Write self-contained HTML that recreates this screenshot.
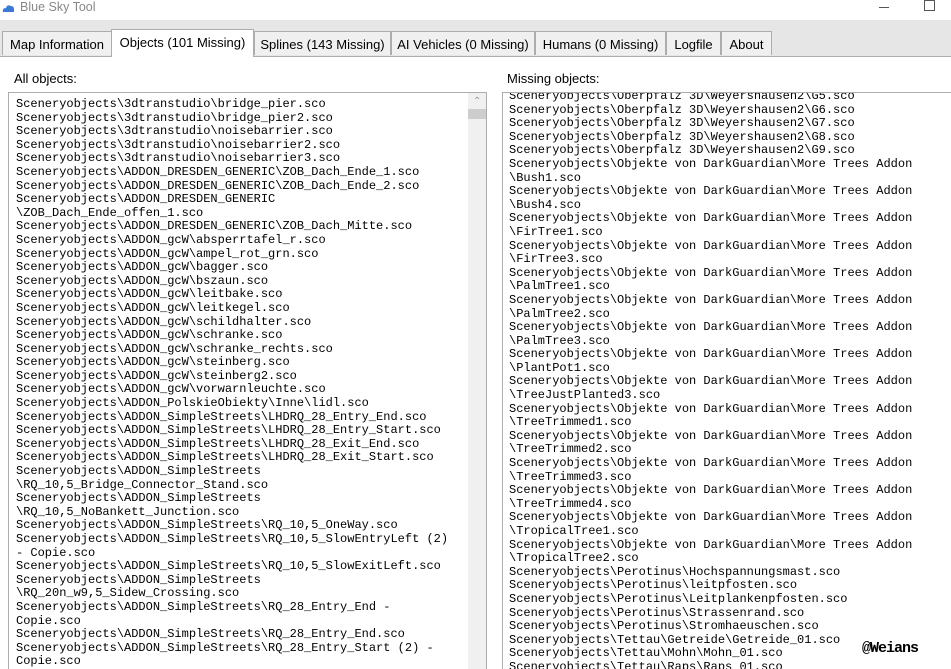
<!DOCTYPE html>
<html><head><meta charset="utf-8"><style>
html,body{margin:0;width:951px;height:669px;overflow:hidden}
body{background:#fff;font-family:"Liberation Sans",sans-serif;position:relative}
.title{position:absolute;left:20px;top:0px;font-size:12.5px;color:#888;}
.bar{position:absolute;left:0;top:20px;width:951px;height:36px;background:#e6e6e6;border-bottom:1px solid #adadad}
.tab{position:absolute;top:31px;height:24px;background:#f0f0f0;border:1px solid #adadad;border-bottom:none;font-size:13px;line-height:25px;text-align:center;color:#000;box-sizing:border-box}
.tab.sel{top:29px;height:28px;background:#fff;line-height:26px;border-bottom:none;z-index:2}
.lbl{position:absolute;font-size:13px;color:#000}
.box{position:absolute;border:1px solid #adadad;background:#fff;overflow:hidden}
.txt{position:absolute;font-family:"Liberation Mono",monospace;font-size:12px;line-height:13.6px;white-space:pre;color:#000}
</style></head><body>
<svg style="position:absolute;left:2px;top:3px" width="13" height="10"><path d="M1 9 Q0 5 4 5 Q5 1 9 3 Q12 3 12 6 L12 9 Z" fill="#3a7ad6"/></svg>
<div class="title">Blue Sky Tool</div>
<div style="position:absolute;left:879px;top:7px;width:10px;height:1px;background:#555"></div>
<div style="position:absolute;left:924px;top:0px;width:9px;height:9px;border:1px solid #555"></div>
<div class="bar"></div>
<div class="tab" style="left:2px;width:110px">Map Information</div>
<div class="tab sel" style="left:111px;width:143px">Objects (101 Missing)</div>
<div class="tab" style="left:254px;width:137px">Splines (143 Missing)</div>
<div class="tab" style="left:391px;width:144px">AI Vehicles (0 Missing)</div>
<div class="tab" style="left:535px;width:131px">Humans (0 Missing)</div>
<div class="tab" style="left:666px;width:55px">Logfile</div>
<div class="tab" style="left:721px;width:51px">About</div>
<div class="lbl" style="left:14px;top:71px">All objects:</div>
<div class="lbl" style="left:507px;top:71px">Missing objects:</div>
<div class="box" style="left:8px;top:92px;width:477px;height:590px">
<div class="txt" style="left:7px;top:5px">Sceneryobjects\3dtranstudio\bridge_pier.sco
Sceneryobjects\3dtranstudio\bridge_pier2.sco
Sceneryobjects\3dtranstudio\noisebarrier.sco
Sceneryobjects\3dtranstudio\noisebarrier2.sco
Sceneryobjects\3dtranstudio\noisebarrier3.sco
Sceneryobjects\ADDON_DRESDEN_GENERIC\ZOB_Dach_Ende_1.sco
Sceneryobjects\ADDON_DRESDEN_GENERIC\ZOB_Dach_Ende_2.sco
Sceneryobjects\ADDON_DRESDEN_GENERIC
\ZOB_Dach_Ende_offen_1.sco
Sceneryobjects\ADDON_DRESDEN_GENERIC\ZOB_Dach_Mitte.sco
Sceneryobjects\ADDON_gcW\absperrtafel_r.sco
Sceneryobjects\ADDON_gcW\ampel_rot_grn.sco
Sceneryobjects\ADDON_gcW\bagger.sco
Sceneryobjects\ADDON_gcW\bszaun.sco
Sceneryobjects\ADDON_gcW\leitbake.sco
Sceneryobjects\ADDON_gcW\leitkegel.sco
Sceneryobjects\ADDON_gcW\schildhalter.sco
Sceneryobjects\ADDON_gcW\schranke.sco
Sceneryobjects\ADDON_gcW\schranke_rechts.sco
Sceneryobjects\ADDON_gcW\steinberg.sco
Sceneryobjects\ADDON_gcW\steinberg2.sco
Sceneryobjects\ADDON_gcW\vorwarnleuchte.sco
Sceneryobjects\ADDON_PolskieObiekty\Inne\lidl.sco
Sceneryobjects\ADDON_SimpleStreets\LHDRQ_28_Entry_End.sco
Sceneryobjects\ADDON_SimpleStreets\LHDRQ_28_Entry_Start.sco
Sceneryobjects\ADDON_SimpleStreets\LHDRQ_28_Exit_End.sco
Sceneryobjects\ADDON_SimpleStreets\LHDRQ_28_Exit_Start.sco
Sceneryobjects\ADDON_SimpleStreets
\RQ_10,5_Bridge_Connector_Stand.sco
Sceneryobjects\ADDON_SimpleStreets
\RQ_10,5_NoBankett_Junction.sco
Sceneryobjects\ADDON_SimpleStreets\RQ_10,5_OneWay.sco
Sceneryobjects\ADDON_SimpleStreets\RQ_10,5_SlowEntryLeft (2)
- Copie.sco
Sceneryobjects\ADDON_SimpleStreets\RQ_10,5_SlowExitLeft.sco
Sceneryobjects\ADDON_SimpleStreets
\RQ_20n_w9,5_Sidew_Crossing.sco
Sceneryobjects\ADDON_SimpleStreets\RQ_28_Entry_End -
Copie.sco
Sceneryobjects\ADDON_SimpleStreets\RQ_28_Entry_End.sco
Sceneryobjects\ADDON_SimpleStreets\RQ_28_Entry_Start (2) -
Copie.sco</div>
<div style="position:absolute;left:459px;top:0;width:18px;height:590px;background:#f0f0f0"></div>
<div style="position:absolute;left:459px;top:16px;width:18px;height:10px;background:#cdcdcd"></div>
<div style="position:absolute;left:464px;top:3px;font-size:10px;color:#999">&#8963;</div>
</div>
<div class="box" style="left:502px;top:92px;width:460px;height:590px">
<div class="txt" style="left:6px;top:-3px">Sceneryobjects\Oberpfalz 3D\Weyershausen2\G5.sco
Sceneryobjects\Oberpfalz 3D\Weyershausen2\G6.sco
Sceneryobjects\Oberpfalz 3D\Weyershausen2\G7.sco
Sceneryobjects\Oberpfalz 3D\Weyershausen2\G8.sco
Sceneryobjects\Oberpfalz 3D\Weyershausen2\G9.sco
Sceneryobjects\Objekte von DarkGuardian\More Trees Addon
\Bush1.sco
Sceneryobjects\Objekte von DarkGuardian\More Trees Addon
\Bush4.sco
Sceneryobjects\Objekte von DarkGuardian\More Trees Addon
\FirTree1.sco
Sceneryobjects\Objekte von DarkGuardian\More Trees Addon
\FirTree3.sco
Sceneryobjects\Objekte von DarkGuardian\More Trees Addon
\PalmTree1.sco
Sceneryobjects\Objekte von DarkGuardian\More Trees Addon
\PalmTree2.sco
Sceneryobjects\Objekte von DarkGuardian\More Trees Addon
\PalmTree3.sco
Sceneryobjects\Objekte von DarkGuardian\More Trees Addon
\PlantPot1.sco
Sceneryobjects\Objekte von DarkGuardian\More Trees Addon
\TreeJustPlanted3.sco
Sceneryobjects\Objekte von DarkGuardian\More Trees Addon
\TreeTrimmed1.sco
Sceneryobjects\Objekte von DarkGuardian\More Trees Addon
\TreeTrimmed2.sco
Sceneryobjects\Objekte von DarkGuardian\More Trees Addon
\TreeTrimmed3.sco
Sceneryobjects\Objekte von DarkGuardian\More Trees Addon
\TreeTrimmed4.sco
Sceneryobjects\Objekte von DarkGuardian\More Trees Addon
\TropicalTree1.sco
Sceneryobjects\Objekte von DarkGuardian\More Trees Addon
\TropicalTree2.sco
Sceneryobjects\Perotinus\Hochspannungsmast.sco
Sceneryobjects\Perotinus\leitpfosten.sco
Sceneryobjects\Perotinus\Leitplankenpfosten.sco
Sceneryobjects\Perotinus\Strassenrand.sco
Sceneryobjects\Perotinus\Stromhaeuschen.sco
Sceneryobjects\Tettau\Getreide\Getreide_01.sco
Sceneryobjects\Tettau\Mohn\Mohn_01.sco
Sceneryobjects\Tettau\Raps\Raps_01.sco</div>
</div>
<div style="position:absolute;left:862px;top:640px;font-family:'Liberation Mono',monospace;font-weight:bold;font-size:15px;color:#000;background:#fff;letter-spacing:-1px">@Weians</div>
</body></html>
